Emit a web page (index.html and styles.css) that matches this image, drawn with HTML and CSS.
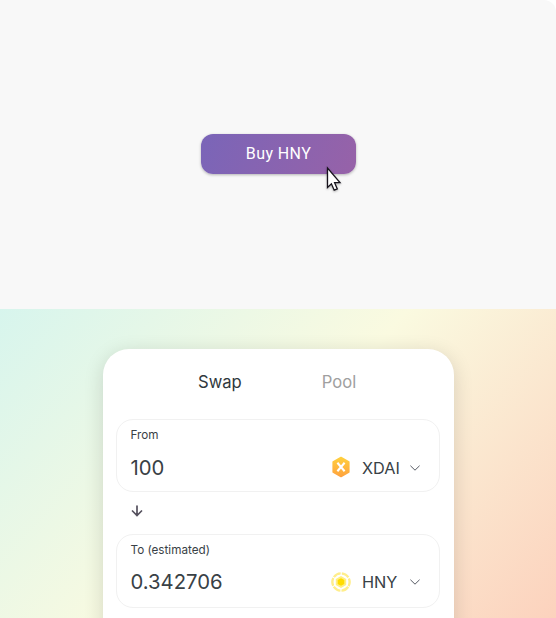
FILE: index.html
```
<!DOCTYPE html>
<html lang="en">
<head>
<meta charset="utf-8">
<title>Buy HNY</title>
<link rel="stylesheet" href="styles.css">
</head>
<body>
<section class="intro">
  <button class="buy">Buy HNY
    <svg class="cursor" width="22" height="30" viewBox="0 0 22 30"><path d="M3.5 3V22.5L7.4 18.8L10.2 25.2L13.3 23.9L10.6 17.7H16Z" fill="#fff" stroke="#17131c" stroke-width="1.3"/></svg>
  </button>
</section>
<section class="exchange">
  <main class="card">
    <nav class="tabs"><span class="tab active">Swap</span><span class="tab">Pool</span></nav>
    <div class="field">
      <div class="label">From</div>
      <div class="row">
        <span class="amount">100</span>
        <svg class="token" width="20" height="22" viewBox="0 0 20 22">
          <defs><linearGradient id="gold" x1="0" y1="0" x2="0" y2="1"><stop stop-color="#ffcf3d"/><stop offset="1" stop-color="#ffa33e"/></linearGradient></defs>
          <path d="M10 1.5L17.8 6V16L10 20.5L2.2 16V6Z" fill="url(#gold)" stroke="url(#gold)" stroke-width="1.6" stroke-linejoin="round"/>
          <path d="M6.4 6.8L13.6 15.2M13.6 6.8L6.4 15.2" stroke="#fff" stroke-width="2.1"/>
        </svg>
        <span class="symbol">XDAI</span>
        <svg class="chevron" width="10" height="7" viewBox="0 0 10 7"><path d="M.7 1L5 5.2L9.3 1"/></svg>
      </div>
    </div>
    <svg class="arrow" width="12" height="12" viewBox="0 0 12 12"><path d="M6 1V10.5M1.5 6L6 10.5L10.5 6"/></svg>
    <div class="field">
      <div class="label">To (estimated)</div>
      <div class="row">
        <span class="amount">0.342706</span>
        <svg class="token" width="20" height="22" viewBox="0 0 20 22">
          <circle cx="10" cy="11" r="8.6" fill="none" stroke="#ffee8c" stroke-width="2.4" stroke-dasharray="7.9 1.106" stroke-dashoffset="-.55" transform="rotate(30 10 11)"/>
          <path d="M10 3.6L16.4 7.3V14.7L10 18.4L3.6 14.7V7.3Z" fill="#fff"/>
          <path d="M10 5L15.2 8V14L10 17L4.8 14V8Z" fill="#ffef82"/>
          <path d="M10 7.2L13.3 9.1V12.9L10 14.8L6.7 12.9V9.1Z" fill="#ffdc00"/>
        </svg>
        <span class="symbol">HNY</span>
        <svg class="chevron" width="10" height="7" viewBox="0 0 10 7"><path d="M.7 1L5 5.2L9.3 1"/></svg>
      </div>
    </div>
  </main>
</section>
</body>
</html>
```
FILE: styles.css
```
* { box-sizing: border-box; }
body { margin: 0; height: 618px; overflow: hidden; background: #fff; font-family: Inter, sans-serif; color: #394146; }
.intro { height: 309px; padding-top: 134px; background: #f8f8f8; border-top-right-radius: 12px; }
.buy { position: relative; display: block; width: 155px; height: 40px; margin-left: 201px; padding: 0; border: 0; border-radius: 12px; background: linear-gradient(110deg, #7a65b8, #9762a8); box-shadow: 0 1px 3px rgba(0,0,0,.28); color: #fff; font: 450 16px/40px Roboto, sans-serif; letter-spacing: .4px; text-align: center; }
.cursor { position: absolute; left: 123px; top: 31px; filter: drop-shadow(0 1px 1px rgba(0,0,0,.3)); }
.exchange { height: 309px; padding: 39.5px 102.5px 0 103px; overflow: hidden; background: linear-gradient(132deg, #d7f5ed 0%, #fafae0 49%, #fcd2bd 100%); }
.card { height: 330px; padding: 0 13.5px 0 13px; border-radius: 26px; background: #fff; box-shadow: 0 4px 20px rgba(0,0,0,.14); }
.tabs { height: 70px; padding: 22.5px 0 0 82px; display: flex; gap: 80px; font-size: 16.6px; line-height: 22px; }
.tab { color: #a0a0a0; }
.tab.active { color: #30383d; }
.field { height: 73.5px; border: 1px solid #f1f1f1; border-radius: 17px; padding: 7px 18px 0 13.5px; }
.label { font-size: 11.7px; line-height: 16px; }
.row { height: 28px; margin-top: 10px; display: flex; align-items: center; }
.amount { width: 200.5px; font-size: 20.3px; line-height: 28px; }
.symbol { width: 48px; margin-left: 11px; font-size: 16.3px; }
.chevron, .arrow { fill: none; stroke: #565a63; stroke-width: 1.1; stroke-linecap: round; }
.chevron { margin-top: 1px; stroke-width: 1; }
.field:first-of-type .row { margin-top: 11px; }
.field:first-of-type .token { margin-top: -1px; }
.arrow { display: block; margin: 13px 0 17px 15px; stroke: #55515e; stroke-width: 1.7; }
```
